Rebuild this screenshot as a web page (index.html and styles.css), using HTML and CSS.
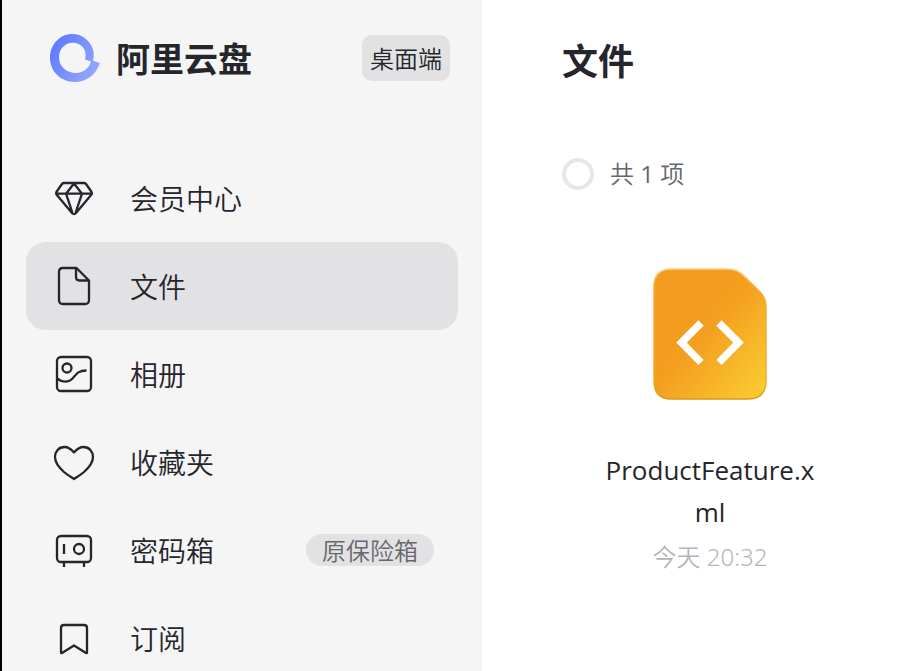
FILE: index.html
```html
<!DOCTYPE html>
<html lang="zh-CN">
<head>
<meta charset="utf-8">
<title>阿里云盘</title>
<link rel="stylesheet" href="styles.css">
</head>
<body>
<div class="app">
  <aside class="sidebar">
    <header class="brand">
      <svg class="brand-logo" viewBox="0 0 52 48" aria-hidden="true">
        <defs>
          <linearGradient id="ring" x1="0" y1="0.2" x2="1" y2="0.8">
            <stop offset="0" stop-color="#5c78ff"/>
            <stop offset="1" stop-color="#98a9ff"/>
          </linearGradient>
        </defs>
        <path fill="url(#ring)" d="M43 26.700C44.500 22 44 16.500 41.500 11.800C37.800 4.600 30.500 0 22.500 0C9.800 0 0 10.500 0 23.800C0 37.600 10.800 48 24.500 48C36.800 48 46.500 40.500 49.800 29Z M35 25.500L41 27.500C38.800 34.500 33 39 26 39C16.500 39 9 32.300 9 23.500C9 15 15 8.800 22.800 8.800C30.300 8.800 38 15 35 25.500Z" fill-rule="evenodd"/>
      </svg>
      <span class="brand-name">阿里云盘</span>
      <button class="desktop" type="button">桌面端</button>
    </header>
    <nav class="menu">
      <a class="item" href="#vip">
        <svg class="icon" viewBox="0 0 48 48" aria-hidden="true"><path d="M14 9H34Q35.200 9 36 10L41.600 18Q42.400 19.300 41.500 20.500L26 39Q24 41.200 22 39L6.500 20.500Q5.600 19.300 6.400 18L12 10Q12.800 9 14 9ZM6 19.700H42M24 9.500L16 19.700L22.500 39M24 9.500L32 19.700L25.500 39"/></svg>
        <span>会员中心</span>
      </a>
      <a class="item active" href="#files" aria-current="page">
        <svg class="icon" viewBox="0 0 48 48" aria-hidden="true"><path d="M26 6H13Q9 6 9 10V38Q9 42 13 42H35Q39 42 39 38V18.500L27.500 7Q26.500 6 26 6ZM26 6V15Q26 18.500 29.500 18.500H39"/></svg>
        <span>文件</span>
      </a>
      <a class="item" href="#album">
        <svg class="icon" viewBox="0 0 48 48" aria-hidden="true"><rect x="7" y="7" width="34" height="34" rx="4"/><circle cx="17" cy="18" r="4.500"/><path d="M7 28.500C12 32.500 18.500 33 23 28C27 23 29 20.500 36.500 20.500"/></svg>
        <span>相册</span>
      </a>
      <a class="item" href="#favorites">
        <svg class="icon" viewBox="0 0 48 48" aria-hidden="true"><path d="M24 14.500C20.500 10.500 17.500 9 14.500 9C8.800 9 5 13.500 5 19C5 25 9 29.500 14 34C17.500 37 21 39 24 41C27 39 30.500 37 34 34C39 29.500 43 25 43 19C43 13.500 39.200 9 33.500 9C30.500 9 27.500 10.500 24 14.500Z"/></svg>
        <span>收藏夹</span>
      </a>
      <a class="item" href="#vault">
        <svg class="icon" viewBox="0 0 48 48" aria-hidden="true"><rect x="7" y="10" width="34" height="26" rx="4"/><circle cx="29" cy="23" r="5"/><path d="M14 18V28M14 36V41M34 36V41"/></svg>
        <span>密码箱</span>
        <span class="tag">原保险箱</span>
      </a>
      <a class="item" href="#subscriptions">
        <svg class="icon" viewBox="0 0 48 48" aria-hidden="true"><path d="M14 11H34Q37 11 37 14V38.500Q37 39.500 36 39L24 31.500L12 39Q11 39.500 11 38.500V14Q11 11 14 11Z"/></svg>
        <span>订阅</span>
      </a>
    </nav>
  </aside>
  <main class="content">
    <h1 class="title">文件</h1>
    <label class="summary">
      <input class="check" type="checkbox">
      <span>共 <span class="count">1</span> 项</span>
    </label>
    <article class="file">
      <svg class="file-icon" viewBox="0 0 116 134" aria-hidden="true">
        <defs>
          <linearGradient id="sheet" x1="0.300" y1="0.300" x2="1" y2="1">
            <stop offset="0" stop-color="#f49b20"/>
            <stop offset="0.250" stop-color="#f49f20"/>
            <stop offset="1" stop-color="#facf32"/>
          </linearGradient>
          <linearGradient id="edge" x1="0" y1="0" x2="0" y2="1">
            <stop offset="0" stop-color="#ffd18a"/>
            <stop offset="0.120" stop-color="#f7ad3c"/>
            <stop offset="0.900" stop-color="#efaa25"/>
            <stop offset="1" stop-color="#d99818"/>
          </linearGradient>
        </defs>
        <path fill="url(#sheet)" stroke="url(#edge)" stroke-width="1.500" d="M19 2H76Q85 2 91 8L108 25Q114 31 114 40V114Q114 132 96 132H19Q2 132 2 114V20Q2 2 19 2Z"/>
        <path fill="none" stroke="#fff" stroke-width="7.500" d="M49 56L29.500 75.500L49 95.500M67 56L86.500 75.500L67 95.500"/>
      </svg>
      <p class="file-name">ProductFeature.xml</p>
      <time class="file-time">今天 20:32</time>
    </article>
  </main>
</div>
</body>
</html>
```
FILE: styles.css
```css
* {
  box-sizing: border-box;
}

body {
  margin: 0;
  background: #fff;
  color: #25262b;
  font-family: "Open Sans", "Noto Sans CJK SC", sans-serif;
  font-size: 28px;
  line-height: 40px;
}

.app {
  display: flex;
  height: 100vh;
  overflow: hidden;
  border-left: 2px solid #000;
}

.sidebar {
  flex: 0 0 480px;
  padding: 34px 24px 0;
  background: #f5f5f6;
}

.brand {
  display: flex;
  align-items: center;
  height: 48px;
  margin-bottom: 72px;
  padding: 0 8px 0 24px;
}

.brand-logo {
  width: 52px;
  height: 48px;
}

.brand-name {
  margin-left: 14px;
  font-family: "Noto Sans CJK SC", sans-serif;
  font-size: 34px;
  font-weight: 700;
}

.desktop {
  margin-left: auto;
  padding: 0 8px;
  border: 0;
  border-radius: 10px;
  background: #e2e2e5;
  color: inherit;
  font-family: "Noto Sans CJK SC", sans-serif;
  font-size: 24px;
  font-weight: 350;
  line-height: 46px;
}

.menu {
  display: flex;
  flex-direction: column;
}

.item {
  display: flex;
  align-items: center;
  height: 88px;
  padding: 0 24px;
  border-radius: 20px;
  color: inherit;
  font-family: "Noto Sans CJK SC", sans-serif;
  font-weight: 350;
  text-decoration: none;
}

.active {
  background: #e2e2e5;
}

.icon {
  width: 48px;
  height: 48px;
  margin-right: 32px;
  fill: none;
  stroke: #25262b;
  stroke-width: 2.3;
  stroke-linejoin: round;
}

.tag {
  margin-left: auto;
  padding: 0 16px;
  border-radius: 16px;
  background: #e2e2e5;
  color: #66676b;
  font-size: 24px;
  line-height: 32px;
}

.content {
  flex: 1;
  padding: 34px 80px 0;
}

.title {
  margin: 0 0 74px;
  font-family: "Noto Sans CJK SC", sans-serif;
  font-size: 36px;
  font-weight: 700;
  line-height: 50px;
}

.summary {
  display: flex;
  align-items: center;
  gap: 16px;
  height: 32px;
  color: #66676b;
  font-size: 24px;
  font-weight: 350;
}

.check {
  width: 32px;
  height: 32px;
  margin: 0;
  border: 4px solid #e6e7e9;
  border-radius: 50%;
  appearance: none;
}

.count {
  font-weight: 500;
}

.file {
  display: flex;
  flex-direction: column;
  align-items: center;
  width: 216px;
  margin: 77px 40px 0;
  text-align: center;
}

.file-icon {
  width: 116px;
  height: 134px;
}

.file-name {
  width: 100%;
  margin: 48px 0 0;
  font-size: 26px;
  line-height: 42px;
  overflow-wrap: anywhere;
}

.file-time {
  margin-top: 4px;
  color: #b4b5b8;
  font-family: "Noto Sans", "Noto Sans CJK SC", sans-serif;
  font-size: 24px;
  font-weight: 350;
}
```
